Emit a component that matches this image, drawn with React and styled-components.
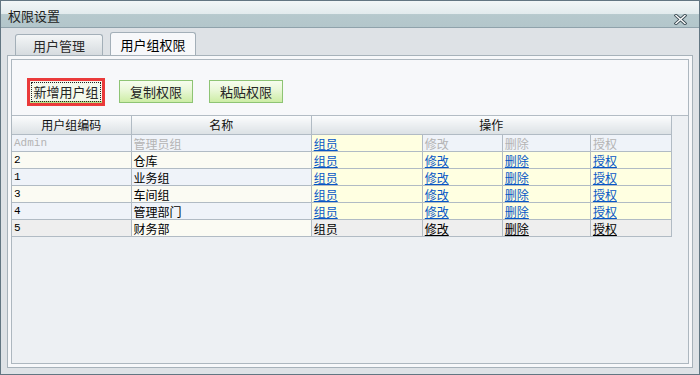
import styled, { createGlobalStyle, css } from "styled-components";

const GlobalStyle = createGlobalStyle`
  html, body {
    margin: 0;
    padding: 0;
    background: #ffffff;
  }
  body {
    font-family: "Noto Sans CJK SC", "Liberation Sans", sans-serif;
    font-size: 12px;
    color: #000;
  }
`;

const Window = styled.div`
  width: 700px;
  height: 375px;
  box-sizing: border-box;
  border: 1px solid #627682;
  background: #dee2e6;
  display: flex;
  flex-direction: column;
`;

const TitleBar = styled.div`
  height: 27px;
  border-bottom: 1px solid #8fa2ab;
  background: linear-gradient(
    #f1f6f7 0%,
    #e2ebed 50%,
    #b6c9cd 52%,
    #b3c6cb 100%
  );
  display: flex;
  align-items: center;
  justify-content: space-between;
  padding: 2px 12px 0 7px;
  box-sizing: border-box;
  font-size: 13px;
  color: #1e1e1e;
`;

const CloseButton = styled.div`
  width: 13px;
  height: 11px;
  display: flex;
  margin-top: 8px;
`;

const Body = styled.div`
  flex: 1;
  display: flex;
  flex-direction: column;
  padding: 4px 6px 6px 6px;
  min-height: 0;
`;

const TabRow = styled.div`
  height: 23px;
  display: flex;
  align-items: flex-end;
  gap: 7px;
  padding-left: 8px;
`;

const Tab = styled.div`
  width: 88px;
  height: 21px;
  box-sizing: border-box;
  border: 1px solid #a3afb8;
  border-bottom: none;
  border-radius: 3px 3px 0 0;
  background: linear-gradient(#f4f6f7, #d6dbdf);
  color: #2a2a2a;
  font-size: 13px;
  display: flex;
  align-items: center;
  justify-content: center;
  padding-top: 1px;

  ${({ $active }) =>
    $active &&
    css`
      width: 86px;
      height: 24px;
      margin-bottom: -1px;
      background: #f7f8fa;
      color: #000;
      padding-bottom: 2px;
    `}
`;

const Panel = styled.div`
  flex: 1;
  display: flex;
  border: 1px solid #a7b2ba;
  background: #f7f8fa;
  padding: 3px;
  min-height: 0;
`;

const Inner = styled.div`
  flex: 1;
  display: flex;
  flex-direction: column;
  border: 1px solid #adb7bf;
  background: #f7f8fa;
`;

const ButtonBar = styled.div`
  height: 55px;
  box-sizing: border-box;
  display: flex;
  align-items: flex-start;
  padding: 18px 0 0 15px;
`;

const FocusRing = styled.div`
  border: 3px solid #ea3a3a;
  display: flex;
`;

const Button = styled.button`
  width: ${({ $w }) => $w || 74}px;
  height: ${({ $h }) => $h || 23}px;
  margin-top: ${({ $top }) => $top || 0}px;
  margin-left: ${({ $left }) => $left || 0}px;
  box-sizing: border-box;
  border: 1px solid #8ec474;
  background: linear-gradient(#f7fcef 0%, #e8f7d6 45%, #cdeda5 100%);
  font-family: "Noto Sans CJK SC", sans-serif;
  font-size: 13px;
  color: #252525;
  padding: 0;
  display: flex;
  align-items: center;
  justify-content: center;
  cursor: pointer;

  ${({ $focused }) =>
    $focused &&
    css`
      border: none;
      border-bottom: 2px solid #b7e08a;
      background: #f4f9ec;
      outline: 1px dotted #222;
      outline-offset: -2px;
    `}
`;

const TableArea = styled.div`
  flex: 1;
  border-top: 1px solid #b3bcc4;
  background: #edf0f3;
`;

const Grid = styled.table`
  border-collapse: collapse;
  table-layout: fixed;
  width: 660px;
`;

const HeadCell = styled.th`
  height: 18px;
  padding: 0;
  border: 1px solid #b1bbc4;
  border-top: none;
  border-left: ${({ $first }) => ($first ? "none" : "1px solid #b1bbc4")};
  background: linear-gradient(#fbfcfd, #dce1e5);
  font-weight: normal;
  font-size: 12px;
  color: #111;
  text-align: center;
  line-height: 16px;
`;

const bgs = {
  blue: "#eff3f9",
  cream: "#fbfbf3",
  yellow: "#ffffe1",
  gray: "#eeeeee",
};

const Cell = styled.td`
  height: 16px;
  padding: 0 0 0 2px;
  border: 1px solid #b1bbc4;
  border-left: ${({ $first }) => ($first ? "none" : "1px solid #b1bbc4")};
  background: ${({ $bg }) => bgs[$bg]};
  font-size: 12px;
  line-height: 15px;
  white-space: nowrap;
  overflow: hidden;
  color: ${({ $muted }) => ($muted ? "#b4b4b4" : "#000")};
  font-family: ${({ $mono }) =>
    $mono
      ? `"Liberation Mono", "DejaVu Sans Mono", monospace`
      : `"Noto Sans CJK SC", sans-serif`};
  ${({ $mono }) =>
    $mono &&
    css`
      font-size: 11px;
    `}
`;

const Link = styled.span`
  color: ${({ $tone }) =>
    $tone === "muted" ? "#b4b4b4" : $tone === "dark" ? "#000" : "#0757c6"};
  text-decoration: ${({ $plain }) => ($plain ? "none" : "underline")};
`;

const rows = [
  { code: "Admin", name: "管理员组", side: "blue", ops: "admin" },
  { code: "2", name: "仓库", side: "cream", ops: "yellow" },
  { code: "1", name: "业务组", side: "blue", ops: "yellow" },
  { code: "3", name: "车间组", side: "cream", ops: "yellow" },
  { code: "4", name: "管理部门", side: "blue", ops: "yellow" },
  { code: "5", name: "财务部", side: "cream", codeBg: "gray", ops: "gray" },
];

const actions = ["修改", "删除", "授权"];

const CloseIcon = () => (
  <svg width="13" height="11" viewBox="0 0 13 11">
    <path
      d="M2 1.5 L11 9.5 M11 1.5 L2 9.5"
      stroke="#3d4d55"
      strokeWidth="3.2"
      strokeLinecap="square"
    />
    <path
      d="M2 1.5 L11 9.5 M11 1.5 L2 9.5"
      stroke="#ffffff"
      strokeWidth="1.4"
      strokeLinecap="square"
    />
  </svg>
);

export default function App() {
  return (
    <>
      <GlobalStyle />
      <Window>
        <TitleBar>
          <span>权限设置</span>
          <CloseButton>
            <CloseIcon />
          </CloseButton>
        </TitleBar>
        <Body>
          <TabRow>
            <Tab>用户管理</Tab>
            <Tab $active>用户组权限</Tab>
          </TabRow>
          <Panel>
            <Inner>
              <ButtonBar>
                <FocusRing>
                  <Button $focused $w={72} $h={22}>
                    新增用户组
                  </Button>
                </FocusRing>
                <Button $top={2} $left={14}>
                  复制权限
                </Button>
                <Button $top={2} $left={16}>
                  粘贴权限
                </Button>
              </ButtonBar>
              <TableArea>
                <Grid>
                  <colgroup>
                    <col style={{ width: 119 }} />
                    <col style={{ width: 180 }} />
                    <col style={{ width: 111 }} />
                    <col style={{ width: 80 }} />
                    <col style={{ width: 88 }} />
                    <col style={{ width: 81 }} />
                  </colgroup>
                  <thead>
                    <tr>
                      <HeadCell $first>用户组编码</HeadCell>
                      <HeadCell>名称</HeadCell>
                      <HeadCell colSpan={4}>操作</HeadCell>
                    </tr>
                  </thead>
                  <tbody>
                    {rows.map(({ code, name, side, codeBg, ops }) => {
                      const admin = ops === "admin";
                      const last = ops === "gray";
                      const tone = admin ? "muted" : last ? "dark" : "link";
                      return (
                        <tr key={code}>
                          <Cell $first $mono $bg={codeBg || side} $muted={admin}>
                            {code}
                          </Cell>
                          <Cell $bg={side} $muted={admin}>
                            {name}
                          </Cell>
                          <Cell $bg={admin ? "yellow" : ops}>
                            <Link $tone={last ? "dark" : "link"} $plain={last}>
                              组员
                            </Link>
                          </Cell>
                          {actions.map((a) => (
                            <Cell key={a} $bg={admin ? "blue" : ops}>
                              <Link $tone={tone} $plain={admin}>
                                {a}
                              </Link>
                            </Cell>
                          ))}
                        </tr>
                      );
                    })}
                  </tbody>
                </Grid>
              </TableArea>
            </Inner>
          </Panel>
        </Body>
      </Window>
    </>
  );
}
